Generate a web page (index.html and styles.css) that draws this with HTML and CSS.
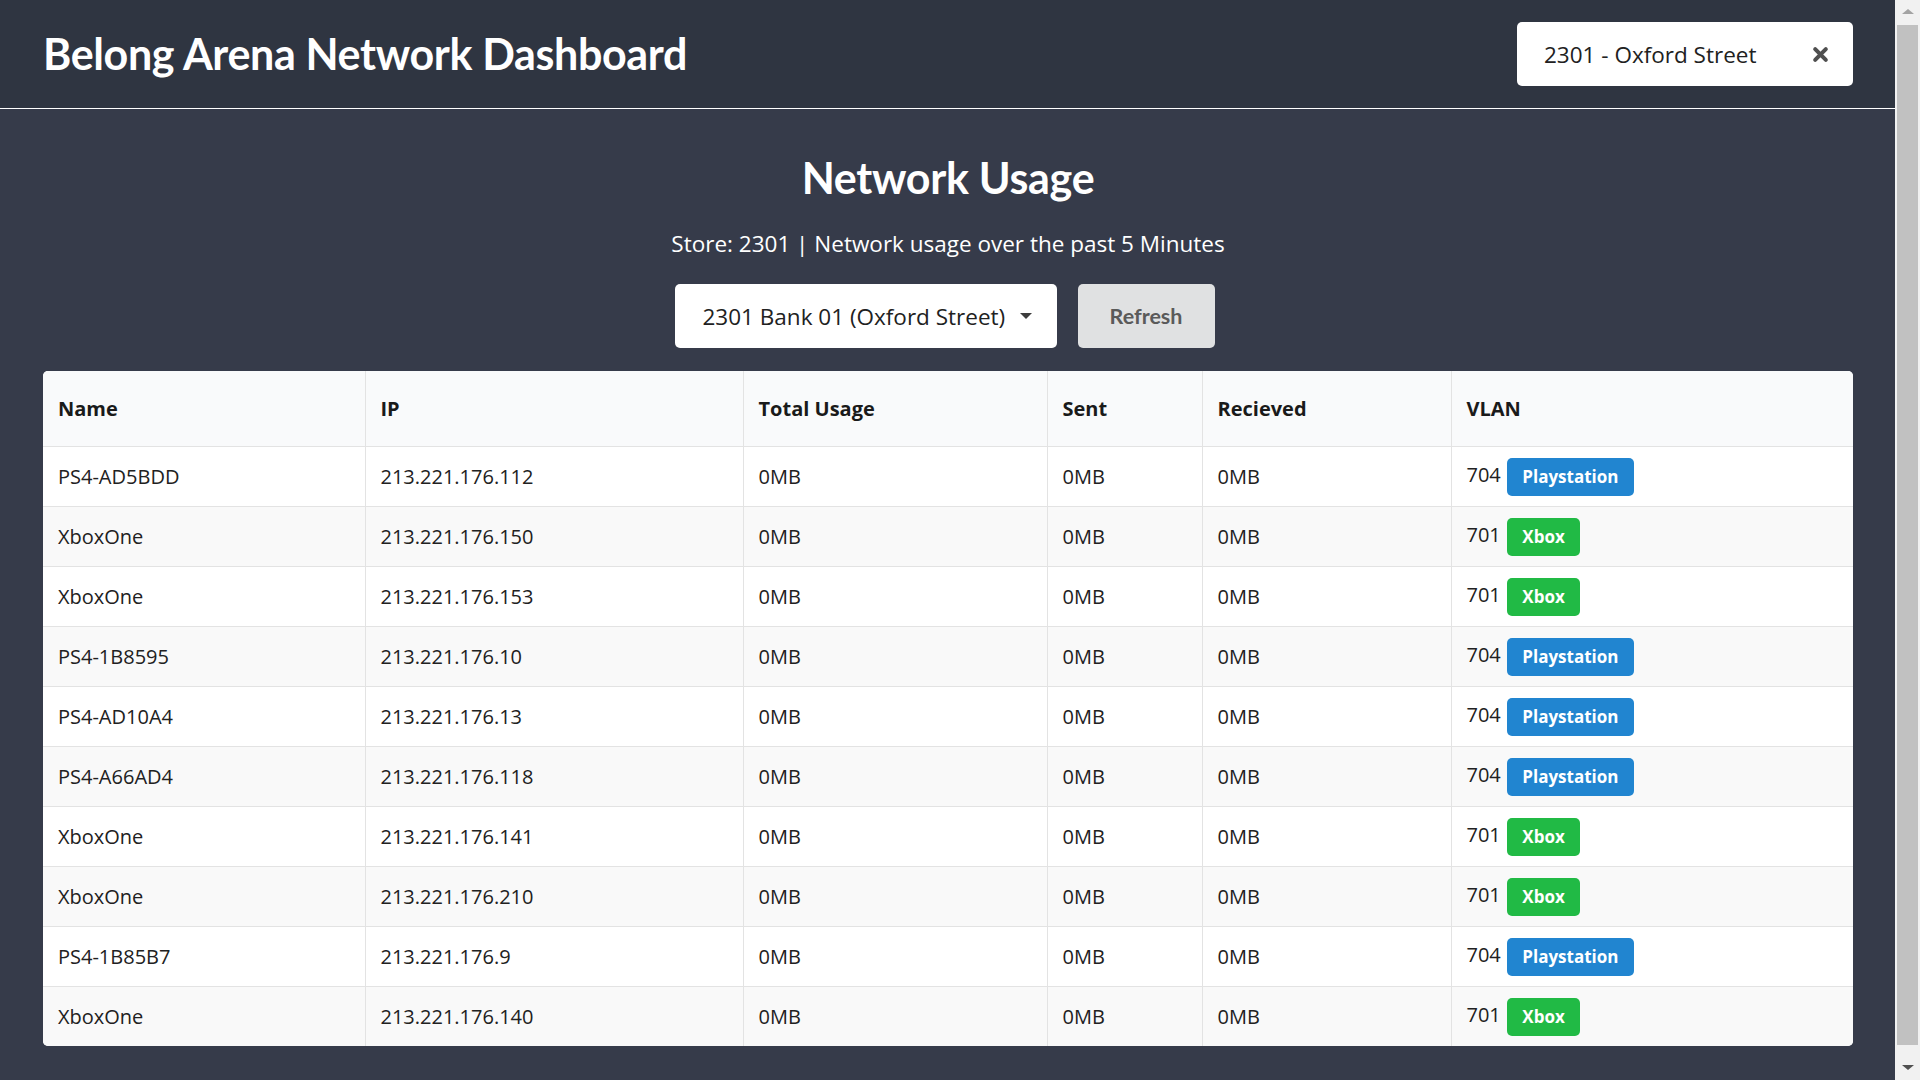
FILE: index.html
```html
<!DOCTYPE html>
<html lang="en">
<head>
<meta charset="utf-8">
<title>Belong Arena Network Dashboard</title>
<link rel="stylesheet" href="styles.css">
</head>
<body>
<div class="viewport">
  <header class="topbar">
    <h1 class="brand">Belong Arena Network Dashboard</h1>
    <div class="store-select">
      <span class="store-select-text">2301 - Oxford Street</span>
      <svg class="clear-icon" viewBox="0 0 16 16" width="17" height="17" aria-hidden="true">
        <path d="M3 3 L13 13 M13 3 L3 13" stroke="#4f4f4f" stroke-width="3.8" stroke-linecap="round" fill="none"/>
      </svg>
    </div>
  </header>
  <main class="content">
    <h2 class="page-title">Network Usage</h2>
    <p class="subtitle">Store: 2301 | Network usage over the past 5 Minutes</p>
    <div class="controls">
      <div class="dropdown">
        <span class="dropdown-text">2301 Bank 01 (Oxford Street)</span>
        <span class="caret"></span>
      </div>
      <button class="btn-refresh" type="button">Refresh</button>
    </div>
    <div class="table-wrap">
      <table class="usage-table">
        <colgroup>
          <col class="c-name"><col class="c-ip"><col class="c-total"><col class="c-sent"><col class="c-recv"><col class="c-vlan">
        </colgroup>
        <thead>
          <tr><th>Name</th><th>IP</th><th>Total Usage</th><th>Sent</th><th>Recieved</th><th>VLAN</th></tr>
        </thead>
        <tbody>
          <tr><td>PS4-AD5BDD</td><td>213.221.176.112</td><td>0MB</td><td>0MB</td><td>0MB</td><td><span class="vlan">704</span><span class="badge badge-ps">Playstation</span></td></tr>
          <tr><td>XboxOne</td><td>213.221.176.150</td><td>0MB</td><td>0MB</td><td>0MB</td><td><span class="vlan">701</span><span class="badge badge-xbox">Xbox</span></td></tr>
          <tr><td>XboxOne</td><td>213.221.176.153</td><td>0MB</td><td>0MB</td><td>0MB</td><td><span class="vlan">701</span><span class="badge badge-xbox">Xbox</span></td></tr>
          <tr><td>PS4-1B8595</td><td>213.221.176.10</td><td>0MB</td><td>0MB</td><td>0MB</td><td><span class="vlan">704</span><span class="badge badge-ps">Playstation</span></td></tr>
          <tr><td>PS4-AD10A4</td><td>213.221.176.13</td><td>0MB</td><td>0MB</td><td>0MB</td><td><span class="vlan">704</span><span class="badge badge-ps">Playstation</span></td></tr>
          <tr><td>PS4-A66AD4</td><td>213.221.176.118</td><td>0MB</td><td>0MB</td><td>0MB</td><td><span class="vlan">704</span><span class="badge badge-ps">Playstation</span></td></tr>
          <tr><td>XboxOne</td><td>213.221.176.141</td><td>0MB</td><td>0MB</td><td>0MB</td><td><span class="vlan">701</span><span class="badge badge-xbox">Xbox</span></td></tr>
          <tr><td>XboxOne</td><td>213.221.176.210</td><td>0MB</td><td>0MB</td><td>0MB</td><td><span class="vlan">701</span><span class="badge badge-xbox">Xbox</span></td></tr>
          <tr><td>PS4-1B85B7</td><td>213.221.176.9</td><td>0MB</td><td>0MB</td><td>0MB</td><td><span class="vlan">704</span><span class="badge badge-ps">Playstation</span></td></tr>
          <tr><td>XboxOne</td><td>213.221.176.140</td><td>0MB</td><td>0MB</td><td>0MB</td><td><span class="vlan">701</span><span class="badge badge-xbox">Xbox</span></td></tr>
        </tbody>
      </table>
    </div>
  </main>
</div>
<aside class="scrollbar" aria-hidden="true">
  <div class="sb-btn sb-up"><span class="arrow-up"></span></div>
  <div class="sb-thumb"></div>
  <div class="sb-btn sb-down"><span class="arrow-down"></span></div>
</aside>
</body>
</html>
```
FILE: styles.css
```css
html, body {
  height: 100%;
}
body {
  margin: 0;
  display: flex;
  overflow: hidden;
  font-family: "Open Sans", "Liberation Sans", sans-serif;
  font-size: 20px;
  color: #212529;
  background: #363b4a;
}
.viewport {
  flex: 1;
  min-width: 0;
  background: #363b4a;
}
.scrollbar {
  width: 25px;
  flex: none;
  height: 1080px;
  background: #f1f1f1;
  display: flex;
  flex-direction: column;
}
.sb-btn {
  height: 25px;
  flex: none;
  display: flex;
  justify-content: center;
}
.sb-up {
  align-items: flex-start;
  padding-top: 9px;
  box-sizing: border-box;
}
.sb-down {
  align-items: flex-start;
  padding-top: 10px;
  box-sizing: border-box;
}
.arrow-up {
  width: 0;
  height: 0;
  border-left: 6px solid transparent;
  border-right: 6px solid transparent;
  border-bottom: 5px solid #a3a3a3;
}
.arrow-down {
  width: 0;
  height: 0;
  border-left: 6px solid transparent;
  border-right: 6px solid transparent;
  border-top: 5px solid #505050;
}
.sb-thumb {
  flex: none;
  height: 1020px;
  margin: 0 2px 10px;
  background: #c1c1c1;
}
.topbar {
  height: 108px;
  background: #2f3541;
  border-bottom: 1px solid #ffffff;
  display: flex;
  align-items: center;
  justify-content: space-between;
  padding: 0 42px 0 43px;
}
.brand {
  margin: 0;
  font-family: Lato, "Open Sans", sans-serif;
  font-weight: 700;
  font-size: 43px;
  line-height: 1.2;
  color: #ffffff;
  letter-spacing: -0.35px;
}
.store-select {
  width: 336px;
  height: 64px;
  box-sizing: border-box;
  background: #ffffff;
  border-radius: 5px;
  display: flex;
  align-items: center;
  justify-content: space-between;
  padding: 0 24px 0 27px;
}
.store-select-text {
  font-size: 22.5px;
  color: #212121;
}
.clear-icon {
  display: block;
}
.content {
  padding: 0 42px 44px 43px;
  display: flex;
  flex-direction: column;
  align-items: center;
}
.page-title {
  margin: 43px 0 0;
  font-family: Lato, "Open Sans", sans-serif;
  font-weight: 700;
  font-size: 43px;
  line-height: 52px;
  color: #ffffff;
  letter-spacing: -0.3px;
}
.subtitle {
  margin: 23px 0 0;
  font-size: 22.5px;
  line-height: 33px;
  color: #ffffff;
}
.controls {
  margin-top: 24px;
  margin-right: 7px;
  display: flex;
  gap: 21px;
}
.dropdown {
  width: 382px;
  height: 64px;
  box-sizing: border-box;
  background: #ffffff;
  border-radius: 5px;
  display: flex;
  align-items: center;
  justify-content: space-between;
  padding: 0 25px 0 28px;
}
.dropdown-text {
  font-size: 22.5px;
  color: #212121;
}
.caret {
  width: 0;
  height: 0;
  border-left: 6px solid transparent;
  border-right: 6px solid transparent;
  border-top: 6px solid #3d3d3d;
}
.btn-refresh {
  width: 137px;
  height: 64px;
  border: 0;
  border-radius: 5px;
  background: #e0e1e2;
  color: #5a5a5a;
  font-family: Lato, "Open Sans", sans-serif;
  font-weight: 700;
  font-size: 21.5px;
  padding: 0;
}
.table-wrap {
  margin-top: 23px;
  align-self: stretch;
  background: #ffffff;
  border-radius: 5px;
  overflow: hidden;
}
.usage-table {
  width: 100%;
  border-collapse: collapse;
  table-layout: fixed;
}
.c-name { width: 322px; }
.c-ip { width: 378px; }
.c-total { width: 304px; }
.c-sent { width: 155px; }
.c-recv { width: 249px; }
.c-vlan { width: auto; }
.usage-table th,
.usage-table td {
  text-align: left;
  padding: 0 15px;
  border-left: 1px solid #e3e3e3;
  border-top: 1px solid #e3e3e3;
  white-space: nowrap;
}
.usage-table th:first-child,
.usage-table td:first-child {
  border-left: 0;
}
.usage-table thead th {
  border-top: 0;
  height: 75px;
  background: #f9fafb;
  font-weight: 700;
  color: #1a1a1a;
  font-size: 20px;
}
.usage-table td {
  height: 59px;
  color: #212121;
}
.usage-table tbody tr:nth-child(even) td {
  background: #f9f9f9;
}
.vlan {
  vertical-align: middle;
  position: relative;
  top: -2px;
}
.badge {
  display: inline-block;
  vertical-align: middle;
  margin-left: 6px;
  height: 38px;
  line-height: 38px;
  padding: 0 15.5px;
  border-radius: 5px;
  color: #ffffff;
  font-weight: 700;
  font-size: 17px;
}
.badge-ps {
  background: #2185d0;
}
.badge-xbox {
  background: #21ba45;
}
```
